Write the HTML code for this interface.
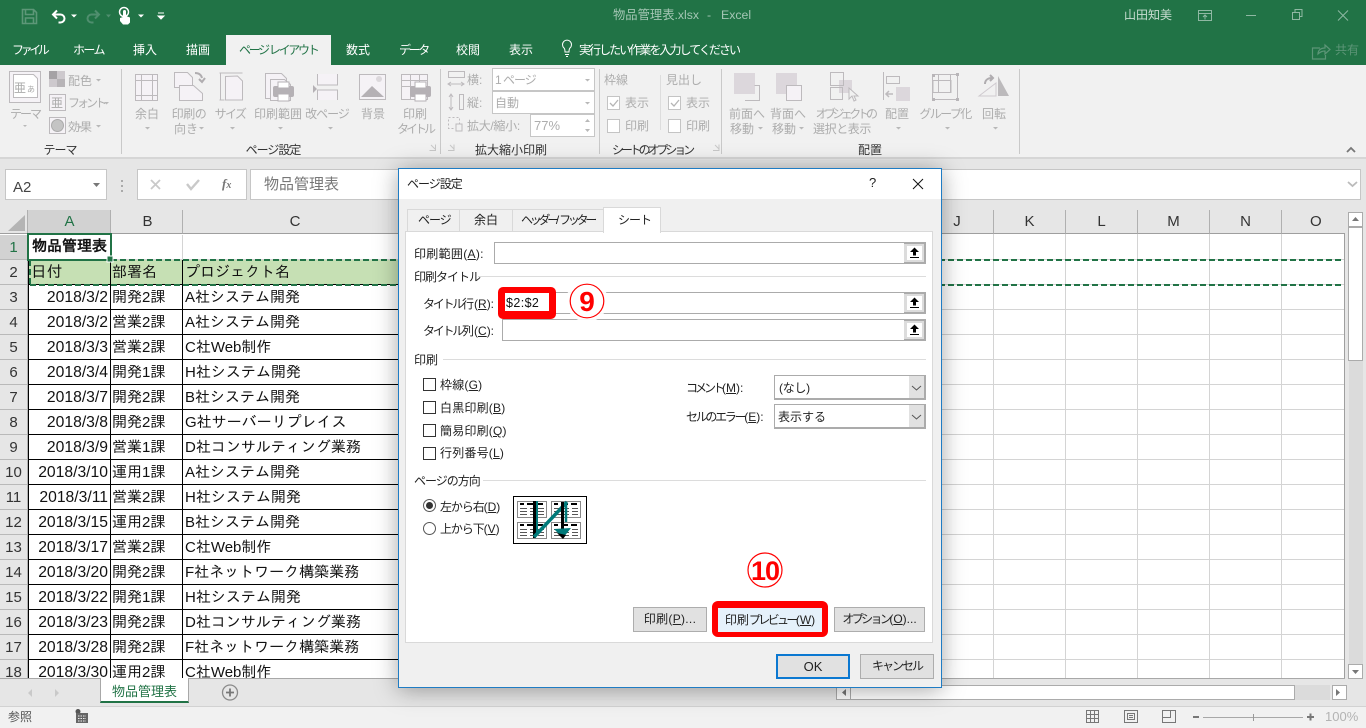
<!DOCTYPE html>
<html lang="ja"><head><meta charset="utf-8"><title>物品管理表.xlsx - Excel</title>
<style>
html,body{margin:0;padding:0;width:1366px;height:728px;overflow:hidden;background:#e6e6e6}
body{position:relative;font-family:"Liberation Sans","Noto Sans CJK JP",sans-serif;font-size:12px;color:#222}
div,span,svg,b{position:absolute;box-sizing:border-box}
.t{position:absolute;white-space:nowrap;line-height:16px;height:16px;font-size:12px;font-family:"Liberation Sans","Noto Sans CJK JP",sans-serif}
.c{transform:translateX(-50%)}
.w{color:#fff}.d{color:#adadad}.g{color:#333}
.k{letter-spacing:-1.6px}.k1{letter-spacing:-1px}
s{text-decoration:none;letter-spacing:0}
.box{background:#fff;border:1px solid #c6c6c6}
.r{left:0;width:398px;height:25px}
.r b{left:0;top:0;width:28px;height:25px;background:#e6e6e6;border-right:1px solid #b0b0b0;border-bottom:1px solid #b9b9b9;font:15px/25px "Liberation Sans",sans-serif;text-align:center;color:#333}
.r span{top:0;height:25px;line-height:25px;font-family:"Liberation Sans","IPAGothic","Noto Sans CJK JP",sans-serif;font-size:15px;color:#111;border-bottom:1px solid #000;white-space:nowrap;overflow:hidden;padding-left:2px}
.r .a{left:28px;width:83px;border-left:1px solid #000;border-right:1px solid #000;text-align:right;padding:0 2px 0 0;font-size:15.7px}
.r .b{left:111px;width:72px;border-right:1px solid #000;padding-left:1px}
.r .e{left:183px;width:215px}
.ch{top:210px;height:24px;background:#e6e6e6;border-right:1px solid #b0b0b0;border-bottom:1px solid #9f9f9f;font:15px/24px "Liberation Sans",sans-serif;text-align:center;color:#333}
.in{background:#fff;border:1px solid #ababab}
.pick{width:22px;height:22px;background:#dcdcdc;border:2px solid #ababab;border-left:0}
.pick i{position:absolute;left:3px;top:2px;width:15px;height:14px;background:#fff;display:block}
.pick svg{left:3px;top:2px}
.cb{width:13px;height:13px;background:#fff;border:1px solid #333}
.rb{width:13px;height:13px;background:#fff;border:1px solid #555;border-radius:50%}
.btn{background:#e1e1e1;border:1px solid #adadad;text-align:center;line-height:23px;font-size:12px;color:#222;white-space:nowrap}
.sep{width:1px;background:#c9c9c9;top:69px;height:85px}
u{text-underline-offset:1px}
</style></head><body>

<!-- title + tabs -->
<div style="left:0;top:0;width:1366px;height:65px;background:#217346"></div>
<div style="left:226px;top:35px;width:105px;height:30px;background:#f1f1f1"></div>
<span class="t" style="left:613px;top:7px;color:#a4c6b4;font-size:12.3px">物品管理表.xlsx</span>
<span class="t" style="left:707px;top:7px;color:#a4c6b4;font-size:12.3px">-</span>
<span class="t" style="left:721px;top:7px;color:#a4c6b4;font-size:12.3px">Excel</span>
<span class="t" style="left:1124px;top:7px;color:#c8ddd1;font-size:12px">山田知美</span>
<span class="t w" style="left:12px;top:42px;letter-spacing:-3.400px">ファイル</span>
<span class="t w k" style="left:73px;top:42px">ホーム</span>
<span class="t w" style="left:133px;top:42px">挿入</span>
<span class="t w" style="left:186px;top:42px">描画</span>
<span class="t k" style="left:239px;top:42px;color:#217346;letter-spacing:-2.300px">ページ レイアウト</span>
<span class="t w" style="left:346px;top:42px">数式</span>
<span class="t w" style="left:399px;top:42px;letter-spacing:-2.400px">データ</span>
<span class="t w" style="left:456px;top:42px">校閲</span>
<span class="t w" style="left:509px;top:42px">表示</span>
<span class="t w" style="left:579px;top:42px;letter-spacing:-1.950px">実行したい作業を入力してください</span>
<span class="t" style="left:1335px;top:42px;color:#5c9577">共有</span>

<!-- ribbon -->
<div style="left:0;top:65px;width:1366px;height:94px;background:#f1f1f1;border-bottom:2px solid #d6d6d6"></div>
<div class="sep" style="left:121px"></div><div class="sep" style="left:440px"></div><div class="sep" style="left:599px"></div><div class="sep" style="left:721px"></div><div class="sep" style="left:1019px"></div>
<div style="left:660px;top:75px;width:1px;height:55px;background:#ddd"></div>

<span class="t d c" style="left:25px;top:106px;letter-spacing:-2px">テーマ</span>
<span class="t d" style="left:68px;top:73px">配色</span>
<span class="t d" style="left:68px;top:95px;letter-spacing:-3px">フォント</span>
<span class="t d" style="left:68px;top:119px">効果</span>
<span class="t d c" style="left:147px;top:106px">余白</span>
<span class="t d c" style="left:189px;top:106px;letter-spacing:-.4px">印刷の</span>
<span class="t d" style="left:174px;top:121px">向き</span>
<span class="t d c k" style="left:230px;top:106px">サイズ</span>
<span class="t d c" style="left:278px;top:106px">印刷範囲</span>
<span class="t d c k1" style="left:327px;top:106px">改ページ</span>
<span class="t d c" style="left:373px;top:106px">背景</span>
<span class="t d c" style="left:415px;top:106px">印刷</span>
<span class="t d c" style="left:415px;top:121px;letter-spacing:-3px">タイトル</span>
<span class="t d" style="left:467px;top:72px">横:</span>
<span class="t d" style="left:467px;top:95px">縦:</span>
<span class="t d" style="left:467px;top:118px;letter-spacing:-.3px">拡大/縮小:</span>
<div class="box" style="left:492px;top:68px;width:103px;height:23px"></div>
<div class="box" style="left:492px;top:91px;width:103px;height:23px"></div>
<div class="box" style="left:530px;top:114px;width:65px;height:23px"></div>
<span class="t d k1" style="left:495px;top:72px">1 ページ</span>
<span class="t d" style="left:495px;top:95px">自動</span>
<span class="t d" style="left:534px;top:118px;font-size:13px">77%</span>
<span class="t d" style="left:604px;top:72px">枠線</span>
<span class="t d" style="left:666px;top:72px">見出し</span>
<span class="t d" style="left:625px;top:95px">表示</span>
<span class="t d" style="left:625px;top:118px">印刷</span>
<span class="t d" style="left:686px;top:95px">表示</span>
<span class="t d" style="left:686px;top:118px">印刷</span>
<span class="t d c" style="left:747px;top:106px">前面へ</span>
<span class="t d" style="left:730px;top:121px">移動</span>
<span class="t d c" style="left:788px;top:106px">背面へ</span>
<span class="t d" style="left:772px;top:121px">移動</span>
<span class="t d c" style="left:845px;top:106px;letter-spacing:-3.600px">オブジェクトの</span>
<span class="t d c" style="left:842px;top:121px;letter-spacing:-.4px">選択と表示</span>
<span class="t d c" style="left:897px;top:106px">配置</span>
<span class="t d c k" style="left:945px;top:106px">グループ化</span>
<span class="t d c" style="left:994px;top:106px">回転</span>

<span class="t g c k1" style="left:60px;top:142px">テーマ</span>
<span class="t g c k1" style="left:273px;top:142px">ページ設定</span>
<span class="t g c" style="left:511px;top:142px">拡大縮小印刷</span>
<span class="t g c" style="left:652px;top:142px;letter-spacing:-3.100px">シートのオプション</span>
<span class="t g c" style="left:870px;top:142px">配置</span>

<!-- ribbon and title icons -->
<svg style="left:0;top:0" width="1366" height="160" fill="none">
<g stroke="#5d9778" stroke-width="1.6"><path d="M22.500 9.500h11l3 3v11h-14zM25.500 9.500v5h8v-5M25.500 23v-5h8v5"/></g>
<path d="M57 10.500l-4 4 4 4M53.500 14.500h7a4 4 0 0 1 0 8h-2" stroke="#fff" stroke-width="2"/>
<path d="M71 14.500h6l-3 3z" fill="#fff"/>
<path d="M95 10.500l4 4-4 4M98.500 14.500h-7a4 4 0 0 0 0 8h2" stroke="#4f8e6e" stroke-width="2"/>
<path d="M106 14.500h5l-2.500 3z" fill="#4f8e6e"/>
<path d="M120 21v-3l3-1V11.500a1.500 1.500 0 0 1 3 0V16l4 1.500v5l-2 2h-5z" fill="#fff"/><circle cx="124" cy="12" r="4.500" stroke="#fff" stroke-width="1.500"/>
<path d="M138 14.500h6l-3 3z" fill="#fff"/>
<path d="M158 13h6M158 16h6l-3 3z" stroke="#fff" fill="#fff"/>
<g stroke="#8fb8a3"><path d="M1198.500 10.500h13v10h-13zM1198.500 13.500h13M1205 19.500v-4M1203 17l2-2 2 2M1246 15.500h10M1292.500 12.500h7v7h-7zM1295 12v-2.500h7v7h-2"/><path d="M1338 10.500l10 10M1348 10.500l-10 10"/></g>
<g stroke="#5c9577" stroke-width="1.200"><path d="M1320 48h-7.500v11h13v-4M1318 54c0-4 3-6 7-6v-3l5 4.500-5 4.500v-3c-3 0-5 1-7 3z"/></g>
<g stroke="#fff"><path d="M564 48a4.500 4.500 0 1 1 6 0c-1 1-1 3-1 4h-4c0-1 0-3-1-4zM565 54.500h4M566 56.500h2"/></g>

<g stroke="#bdbabd" fill="#f5f2f6">
<rect x="9.500" y="71.500" width="31" height="31"/><path d="M13.500 74.500h20l4 4v19h-24z" fill="#fff"/>
<rect x="49.500" y="94.500" width="16" height="16"/><rect x="49.500" y="117.500" width="16" height="16"/>
<rect x="135.500" y="74.500" width="22" height="26"/><path d="M141.500 74.500v26M152.500 74.500v26M135.500 80.500h22M135.500 95.500h22" fill="none"/>
<path d="M174.500 72.500h13l5 5v10h-18z"/><path d="M179.500 85.500h14l9 8v7h-23z"/>
<path d="M219.500 73h23M219.500 100h5M225.500 76.500v23.500h17v-19l-5-5z"/><path d="M220.500 73v27"/>
<path d="M265.500 73.500h16l5 5v20h-21z"/><path d="M270.500 79.500h14l6 5v16h-20z"/>
<path d="M317.500 74v11h20V74M317.500 100V90h20v10" stroke-width="1"/>
<rect x="359.500" y="74.500" width="26" height="25"/>
<rect x="401.500" y="74.500" width="26" height="25"/><path d="M401.500 80.500h26M401.500 86.500h26M410.500 74.500v25M419.500 74.500v25" fill="none"/>
</g>
<g fill="#b5b1b5">
<path d="M49 71h8v8h-8z" fill="#a5a2a5"/><path d="M57 71h8v8h-8z" fill="#cdc9cd"/><path d="M49 79h8v8h-8z" fill="#cdc9cd"/><path d="M57 79h8v8h-8z" fill="#b7b4b7"/>
<circle cx="57.500" cy="125.500" r="6" fill="#c4c4c4" stroke="#aaa"/>
<path d="M195 73c3 0 6 1 7 5M199 79l3 3 3-4" fill="none" stroke="#b0adb0" stroke-width="2"/>
<rect x="273" y="86" width="21" height="11" rx="2"/><rect x="278" y="82" width="11" height="6" fill="#fff" stroke="#b5b1b5"/><rect x="278" y="94" width="11" height="7" fill="#fff" stroke="#b5b1b5"/>
<path d="M313 85l4 4-4 4z"/>
<path d="M361 97l11-11 12 11z"/><circle cx="379" cy="79" r="3" fill="#dcd8dc"/>
<rect x="410" y="86" width="21" height="11" rx="2"/><rect x="415" y="82" width="11" height="6" fill="#fff" stroke="#b5b1b5"/><rect x="415" y="94" width="11" height="7" fill="#fff" stroke="#b5b1b5"/>
</g>
<g fill="#b8b8b8">
<path d="M23 125h4l-2 2zM77 126h5l-2.500 2.500zM145 127h5l-2.500 2.500zM199 127h5l-2.500 2.500zM230 127h5l-2.500 2.500zM278 127h5l-2.500 2.500zM328 127h5l-2.500 2.500z"/>
<path d="M96 79h5l-2.500 2.500zM104 102h5l-2.500 2.500zM96 125h5l-2.500 2.500zM585 79h5l-2.500 2.500zM585 102h5l-2.500 2.500zM585 122l2.500-3 2.500 3zM585 129h5l-2.500 3z"/>
<path d="M758 127h5l-2.500 2.500zM799 127h5l-2.500 2.500zM896 127h5l-2.500 2.500zM945 127h5l-2.500 2.500zM993 127h5l-2.500 2.500z"/>
</g>
<g stroke="#bdbabd"><path d="M448.500 71.500h16v6h-16zM448 84h16M451 82l-3 2 3 2M461 82l3 2-3 2"/><path d="M459.500 94.500h4v15h-4zM451 95v14M449 97l2-3 2 3M449 107l2 3 2-3"/><path d="M448.500 117.500h11v11h-11z" stroke-dasharray="2 2"/><path d="M456 124h6v7h-6z" fill="#f1f1f1"/></g>
<g stroke="#c4c4c4" fill="#fff"><rect x="607.500" y="96.500" width="12" height="13"/><rect x="607.500" y="119.500" width="12" height="13"/><rect x="668.500" y="96.500" width="12" height="13"/><rect x="668.500" y="119.500" width="12" height="13"/></g>
<path d="M610 103l3 3 5-6M671 103l3 3 5-6" stroke="#b5b5b5" stroke-width="1.300"/>
<g fill="#dcd7dc"><rect x="734" y="73" width="21" height="21"/><rect x="776" y="73" width="21" height="21"/><rect x="839" y="80" width="13" height="13"/><rect x="896" y="87" width="14" height="14"/></g>
<g stroke="#bdbabd"><path d="M745 100.500h14.500V85.500h-5"/><rect x="786.500" y="85.500" width="15" height="15" fill="#f5f2f6"/><rect x="830.500" y="72.500" width="13" height="13"/><rect x="830.500" y="87.500" width="12" height="12"/><path d="M849 88l0 11 3-3 2 5 2-1-2-4h4z" fill="#f1f1f1"/><path d="M883.500 72v28M886.500 76.500h13v7h-13z"/><path d="M893 94h-6M889 91l-3 3 3 3" stroke-width="1.500"/>
<rect x="932.500" y="74.500" width="25" height="25"/><rect x="938.500" y="74.500" width="12" height="18"/><rect x="933" y="80.500" width="18" height="12"/></g>
<path d="M932 74h3v3h-3zM956 73h3v3h-3zM932 98h3v3h-3zM956 98h3v3h-3z" fill="#b8b5b8"/>
<path d="M1009 96h-11V76z" fill="#bcbabc"/><path d="M979 96l17-13v13z" stroke="#cfcacf"/><path d="M985 84c0-4 3-6 7-6M990 75l3 3-3 3" stroke="#b0adb0" stroke-width="2"/>
<g stroke="#c8c8c8"><path d="M429.500 150.500h6v-6M431 145l4 4"/><path d="M589 150.500h6v-6M591 145l4 4" transform="translate(-141 0)"/><path d="M713 150.500h6v-6M715 145l4 4"/></g>
<path d="M1347 152l4-4 4 4" stroke="#777" stroke-width="1.800"/>
<text x="14" y="92" font-size="12" fill="#aaa" font-family="Noto Sans CJK JP">亜</text><text x="27" y="92" font-size="8" fill="#aaa" font-family="Noto Sans CJK JP">あ</text>
<text x="51" y="107" font-size="12" fill="#aaa" font-family="Noto Sans CJK JP">亜</text>
</svg>

<!-- formula bar -->
<div class="box" style="left:5px;top:169px;width:102px;height:31px"></div>
<span class="t" style="left:13px;top:180px;font-size:15px;color:#444">A2</span>
<svg style="left:0;top:165px" width="260" height="40" fill="none"><path d="M93 18h7l-3.500 4z" fill="#777"/><path d="M122 15v2M122 20v2M122 25v2" stroke="#aaa" stroke-width="2"/></svg>
<div class="box" style="left:137px;top:169px;width:110px;height:31px"></div>
<div class="box" style="left:250px;top:169px;width:1111px;height:31px"></div>
<svg style="left:137px;top:169px" width="110" height="30" fill="none"><path d="M14 11l9 9M23 11l-9 9" stroke="#c9c9c9" stroke-width="1.800"/><path d="M50 15l4 5 8-9" stroke="#c9c9c9" stroke-width="2.400"/></svg>
<span class="t" style="left:222px;top:176px;font:italic bold 13px/16px 'Liberation Serif',serif;color:#777">f<span style="position:static;font-size:10px">x</span></span>
<span class="t" style="left:264px;top:177px;font-size:15px;color:#777">物品管理表</span>
<svg style="left:1345px;top:178px" width="16" height="14" fill="none"><path d="M3 4l4.500 4L12 4" stroke="#bbb" stroke-width="1.800"/></svg>

<!-- sheet -->
<div style="left:0;top:210px;width:1345px;height:468px;background:#fff;border-right:1px solid #9f9f9f"></div>
<div style="left:0;top:210px;width:1344px;height:468px;background-image:repeating-linear-gradient(to bottom,transparent 0,transparent 24px,#d4d4d4 24px,#d4d4d4 25px);background-position:0 25px;background-repeat:no-repeat"></div>
<div class="ch" style="left:0;width:28px"></div>
<svg style="left:0;top:210px" width="28" height="24"><path d="M25 5v16H8z" fill="#b4b4b4"/></svg>
<div class="ch" style="left:28px;width:83px;background:#d2d2d2;color:#217346;padding-left:1px">A</div>
<div class="ch" style="left:111px;width:72px;padding-left:2px">B</div>
<div class="ch" style="left:183px;width:216px;padding-left:9px">C</div>
<div class="ch" style="left:921px;width:73px">J</div>
<div class="ch" style="left:994px;width:72px">K</div>
<div class="ch" style="left:1066px;width:72px">L</div>
<div class="ch" style="left:1138px;width:72px">M</div>
<div class="ch" style="left:1210px;width:72px">N</div>
<div class="ch" style="left:1282px;width:63px;border-right:0;text-align:left;padding-left:28px">O</div>
<div style="left:993px;top:234px;width:1px;height:444px;background:#d4d4d4"></div>
<div style="left:1065px;top:234px;width:1px;height:444px;background:#d4d4d4"></div>
<div style="left:1137px;top:234px;width:1px;height:444px;background:#d4d4d4"></div>
<div style="left:1209px;top:234px;width:1px;height:444px;background:#d4d4d4"></div>
<div style="left:1281px;top:234px;width:1px;height:444px;background:#d4d4d4"></div>

<div style="left:0;top:234px;width:1345px;height:444px;overflow:hidden">
<div class="r" style="top:1px"><b style="background:#d2d2d2;color:#217346">1</b></div>
<div style="left:110px;top:1px;width:1px;height:25px;background:#d4d4d4"></div>
<div style="left:182px;top:1px;width:1px;height:25px;background:#d4d4d4"></div>
<div class="r" style="top:26px;background:#c6e0b4"><b>2</b><span class="a" style="text-align:left;padding-left:2px;background:#c6e0b4">日付</span><span class="b" style="background:#c6e0b4">部署名</span><span class="e" style="background:#c6e0b4">プロジェクト名</span></div>
<div class="r" style="top:51px"><b>3</b><span class="a">2018/3/2</span><span class="b">開発2課</span><span class="e">A社システム開発</span></div>
<div class="r" style="top:76px"><b>4</b><span class="a">2018/3/2</span><span class="b">営業2課</span><span class="e">A社システム開発</span></div>
<div class="r" style="top:101px"><b>5</b><span class="a">2018/3/3</span><span class="b">営業2課</span><span class="e">C社Web制作</span></div>
<div class="r" style="top:126px"><b>6</b><span class="a">2018/3/4</span><span class="b">開発1課</span><span class="e">H社システム開発</span></div>
<div class="r" style="top:151px"><b>7</b><span class="a">2018/3/7</span><span class="b">開発2課</span><span class="e">B社システム開発</span></div>
<div class="r" style="top:176px"><b>8</b><span class="a">2018/3/8</span><span class="b">開発2課</span><span class="e">G社サーバーリプレイス</span></div>
<div class="r" style="top:201px"><b>9</b><span class="a">2018/3/9</span><span class="b">営業1課</span><span class="e">D社コンサルティング業務</span></div>
<div class="r" style="top:226px"><b>10</b><span class="a">2018/3/10</span><span class="b">運用1課</span><span class="e">A社システム開発</span></div>
<div class="r" style="top:251px"><b>11</b><span class="a">2018/3/11</span><span class="b">営業2課</span><span class="e">H社システム開発</span></div>
<div class="r" style="top:276px"><b>12</b><span class="a">2018/3/15</span><span class="b">運用2課</span><span class="e">B社システム開発</span></div>
<div class="r" style="top:301px"><b>13</b><span class="a">2018/3/17</span><span class="b">営業2課</span><span class="e">C社Web制作</span></div>
<div class="r" style="top:326px"><b>14</b><span class="a">2018/3/20</span><span class="b">開発2課</span><span class="e">F社ネットワーク構築業務</span></div>
<div class="r" style="top:351px"><b>15</b><span class="a">2018/3/22</span><span class="b">開発1課</span><span class="e">H社システム開発</span></div>
<div class="r" style="top:376px"><b>16</b><span class="a">2018/3/23</span><span class="b">開発2課</span><span class="e">D社コンサルティング業務</span></div>
<div class="r" style="top:401px"><b>17</b><span class="a">2018/3/28</span><span class="b">開発2課</span><span class="e">F社ネットワーク構築業務</span></div>
<div class="r" style="top:426px"><b>18</b><span class="a">2018/3/30</span><span class="b">運用2課</span><span class="e">C社Web制作</span></div>
</div>
<span class="t" style="left:32px;top:238px;font-size:15px;font-weight:bold;line-height:18px;height:18px;color:#111;font-family:'Liberation Sans','IPAGothic','Noto Sans CJK JP',sans-serif">物品管理表</span>
<svg style="left:0;top:230px" width="1345" height="60" fill="none">
<path d="M30 30H1344M30 55H1344" stroke="#217346" stroke-width="2" stroke-dasharray="6 3"/>
<path d="M30 30V55" stroke="#217346" stroke-width="2" stroke-dasharray="6 3"/>
<rect x="28" y="4" width="83" height="26" stroke="#217346" stroke-width="2"/>
<rect x="107" y="26" width="6" height="6" fill="#217346" stroke="#fff"/>
</svg>

<!-- scrollbars -->
<div style="left:1345px;top:234px;width:21px;height:472px;background:#e6e6e6"></div>
<div style="left:1345px;top:210px;width:21px;height:24px;background:#e6e6e6"></div>
<div style="left:1349px;top:227px;width:14px;height:437px;background:#dbdbdb"></div>
<div style="left:1348px;top:212px;width:15px;height:15px;background:#fff;border:1px solid #ababab"></div>
<div style="left:1348px;top:227px;width:15px;height:134px;background:#fff;border:1px solid #ababab"></div>
<div style="left:1348px;top:664px;width:15px;height:15px;background:#fff;border:1px solid #ababab"></div>
<svg style="left:1348px;top:212px" width="15" height="470"><path d="M4 9l3.500-4 3.500 4zM4 458h7l-3.500 4z" fill="#777"/></svg>
<div style="left:0;top:678px;width:1345px;height:28px;background:#e6e6e6;border-top:1px solid #a8a8a8"></div>
<div style="left:100px;top:678px;width:89px;height:25px;background:#fff;border-left:1px solid #a8a8a8;border-right:1px solid #a8a8a8;border-bottom:2px solid #217346"></div>
<span class="t" style="left:112px;top:684px;font-size:13px;color:#217346">物品管理表</span>
<svg style="left:20px;top:680px" width="225" height="26" fill="none"><path d="M12 9l-4 4 4 4zM35 9l4 4-4 4z" fill="#c9c9c9"/><circle cx="210" cy="12.500" r="7.500" stroke="#8a8a8a" stroke-width="1.300"/><path d="M206 12.500h8M210 8.500v8" stroke="#777" stroke-width="1.800"/></svg>
<div style="left:942px;top:685px;width:388px;height:15px;background:#dbdbdb"></div>
<div style="left:836px;top:685px;width:15px;height:15px;background:#fff;border:1px solid #ababab"></div>
<div style="left:850px;top:685px;width:445px;height:15px;background:#fff;border:1px solid #ababab"></div>
<div style="left:1332px;top:685px;width:15px;height:15px;background:#fff;border:1px solid #ababab"></div>
<svg style="left:836px;top:685px" width="512" height="15"><path d="M10 4v7l-4-3.500zM500 4v7l4-3.500z" fill="#777"/></svg>

<!-- status -->
<div style="left:0;top:706px;width:1366px;height:22px;background:#f1f1f1;border-top:1px solid #d2d2d2"></div>
<span class="t" style="left:8px;top:709px;color:#555">参照</span>
<svg style="left:0;top:706px" width="1366" height="22" fill="none">
<circle cx="78" cy="5.500" r="2.500" fill="#555"/><path d="M76 7h12v10h-12z" fill="#666"/><path d="M78 10h8M78 12.500h8M78 15h8" stroke="#eee" stroke-dasharray="1.500 1"/>
<g stroke="#777"><path d="M1086.500 4.500h12v12h-12zM1086.500 8.500h12M1086.500 12.500h12M1090.500 4.500v12M1094.500 4.500v12"/><path d="M1124.500 4.500h13v12h-13z" stroke-width="1"/><path d="M1127.500 7.500h7v6h-7zM1129 9.500h4M1129 11.500h4"/><path d="M1162.500 4.500h13v12h-13zM1162.500 11.500h8v-7"/></g>
<path d="M1193 11h6M1307 11h7M1310.500 7.500v7" stroke="#777" stroke-width="2"/>
<path d="M1203 11.500h100" stroke="#a8a8a8"/><path d="M1253.500 8v7" stroke="#999"/>
</svg>
<span class="t" style="left:1325px;top:709px;color:#b3b3b3;font-size:13px">100%</span>

<!-- dialog -->
<div style="left:398px;top:168px;width:544px;height:520px;background:#f0f0f0;border:1px solid #1f7cc4;box-shadow:0 2px 22px rgba(0,0,0,.35)"></div>
<div style="left:399px;top:169px;width:542px;height:30px;background:#fff"></div>
<span class="t k1" style="left:407px;top:176px">ページ設定</span>
<span class="t" style="left:869px;top:175px;font-size:13px;color:#222">?</span>
<svg style="left:905px;top:172px" width="24" height="24" fill="none"><path d="M8 7l10 10M18 7L8 17" stroke="#111" stroke-width="1"/></svg>

<div style="left:407px;top:209px;width:53px;height:23px;background:#f0f0f0;border:1px solid #d9d9d9"></div>
<div style="left:459px;top:209px;width:54px;height:23px;background:#f0f0f0;border:1px solid #d9d9d9"></div>
<div style="left:512px;top:209px;width:93px;height:23px;background:#f0f0f0;border:1px solid #d9d9d9"></div>
<div style="left:405px;top:231px;width:528px;height:412px;background:#fff;border:1px solid #d9d9d9"></div>
<div style="left:603px;top:207px;width:58px;height:26px;background:#fff;border:1px solid #d9d9d9;border-bottom:0"></div>
<span class="t k1" style="left:418px;top:212px">ページ</span>
<span class="t" style="left:474px;top:212px">余白</span>
<span class="t" style="left:521px;top:212px;letter-spacing:-3.300px">ヘッダー<s>/</s>フッター</span>
<span class="t k1" style="left:618px;top:212px">シート</span>

<span class="t" style="left:414px;top:246px;letter-spacing:.3px">印刷範囲(<u>A</u>):</span>
<div class="in" style="left:494px;top:242px;width:411px;height:22px;border-right:0"></div>
<div class="pick" style="left:904px;top:242px"><i></i><svg width="15" height="14" fill="none"><path d="M7.500 1.500l-4.500 4.500h3v3.500h3V6h3z" fill="#000"/><path d="M3 11.500h9" stroke="#000"/></svg></div>
<span class="t k1" style="left:414px;top:269px">印刷タイトル</span>
<div style="left:478px;top:276px;width:448px;height:1px;background:#dcdcdc"></div>
<span class="t" style="left:423px;top:296px;letter-spacing:-2.250px">タイトル<s>行(<u>R</u>):</s></span>
<div class="in" style="left:498px;top:292px;width:407px;height:22px;border-right:0"></div>
<div class="pick" style="left:904px;top:292px"><i></i><svg width="15" height="14" fill="none"><path d="M7.500 1.500l-4.500 4.500h3v3.500h3V6h3z" fill="#000"/><path d="M3 11.500h9" stroke="#000"/></svg></div>
<span class="t" style="left:423px;top:323px;letter-spacing:-2.250px">タイトル<s>列(<u>C</u>):</s></span>
<div class="in" style="left:502px;top:319px;width:403px;height:22px;border-right:0"></div>
<div class="pick" style="left:904px;top:319px"><i></i><svg width="15" height="14" fill="none"><path d="M7.500 1.500l-4.500 4.500h3v3.500h3V6h3z" fill="#000"/><path d="M3 11.500h9" stroke="#000"/></svg></div>
<div style="left:498px;top:287px;width:58px;height:32px;background:#f00;border-radius:5px"></div>
<div style="left:505px;top:293px;width:44px;height:18px;background:#fff"></div>
<span class="t" style="left:506px;top:295px;font-size:12.500px;color:#111;letter-spacing:.4px">$2:$2</span>

<span class="t" style="left:414px;top:352px">印刷</span>
<div style="left:443px;top:359px;width:483px;height:1px;background:#dcdcdc"></div>
<div class="cb" style="left:423px;top:378px"></div><span class="t" style="left:440px;top:377px;letter-spacing:.2px">枠線(<u>G</u>)</span>
<div class="cb" style="left:423px;top:401px"></div><span class="t" style="left:440px;top:400px;letter-spacing:.2px">白黒印刷(<u>B</u>)</span>
<div class="cb" style="left:423px;top:424px"></div><span class="t" style="left:440px;top:423px;letter-spacing:.2px">簡易印刷(<u>Q</u>)</span>
<div class="cb" style="left:423px;top:447px"></div><span class="t" style="left:440px;top:445px;letter-spacing:.2px">行列番号(<u>L</u>)</span>
<span class="t k1" style="left:414px;top:473px">ページの方向</span>
<div style="left:483px;top:480px;width:443px;height:1px;background:#dcdcdc"></div>
<div class="rb" style="left:423px;top:499px"></div><div style="left:426px;top:502px;width:7px;height:7px;border-radius:50%;background:#333"></div>
<div class="rb" style="left:423px;top:522px"></div>
<span class="t" style="left:440px;top:499px;letter-spacing:-1.100px">左から右<s>(<u>D</u>)</s></span>
<span class="t" style="left:440px;top:521px;letter-spacing:-1.100px">上から下<s>(<u>V</u>)</s></span>
<svg style="left:513px;top:496px" width="74" height="48" fill="#fff">
<rect x=".5" y=".5" width="73" height="47" stroke="#000"/>
<g stroke="#888"><rect x="4.500" y="5.500" width="29" height="16"/><rect x="38.500" y="5.500" width="29" height="16"/><rect x="4.500" y="26.500" width="29" height="16"/><rect x="38.500" y="26.500" width="29" height="16"/></g>
<path d="M7 8h4M14 8h7M24 8h6M41 8h4M48 8h7M58 8h6M7 29h4M14 29h7M24 29h6M41 29h4M48 29h7M58 29h6" stroke="#000" stroke-width="2"/>
<path d="M7 12.500h7M7 15.500h7M7 18.500h7M17 12.500h5M17 15.500h5M17 18.500h5M25 12.500h6M25 15.500h6M25 18.500h6M41 12.500h7M41 15.500h7M41 18.500h7M51 12.500h5M51 15.500h5M51 18.500h5M59 12.500h6M59 15.500h6M59 18.500h6M7 33.500h7M7 36.500h7M7 39.500h7M17 33.500h5M17 36.500h5M17 39.500h5M25 33.500h6M25 36.500h6M25 39.500h6M41 33.500h7M41 36.500h7M41 39.500h7M51 33.500h5M51 36.500h5M51 39.500h5M59 33.500h6M59 36.500h6M59 39.500h6" stroke="#555"/>
<path d="M21.500 5v37" stroke="#000" stroke-width="3"/><path d="M24 5v33" stroke="#007a7a" stroke-width="2"/>
<path d="M21 41L54 6" stroke="#007a7a" stroke-width="3.500"/><path d="M49.500 6v33" stroke="#000" stroke-width="3"/><path d="M53 6v20" stroke="#007a7a" stroke-width="2.500"/>
<path d="M41 33l9 9 8-10z" fill="#007a7a"/><path d="M44 37l6 6 3-4z" fill="#000"/>
</svg>

<span class="t" style="left:686px;top:380px;letter-spacing:-3px">コメント<s>(<u>M</u>):</s></span>
<span class="t" style="left:686px;top:409px;letter-spacing:-2.300px">セルのエラー<s>(<u>E</u>):</s></span>
<div class="in" style="left:774px;top:375px;width:152px;height:25px;border-width:1px 2px 2px 1px"></div>
<div class="in" style="left:774px;top:404px;width:152px;height:25px;border-width:1px 2px 2px 1px"></div>
<div style="left:909px;top:376px;width:15px;height:22px;background:#e1e1e1"></div>
<div style="left:909px;top:405px;width:15px;height:22px;background:#e1e1e1"></div>
<svg style="left:909px;top:377px" width="15" height="50" fill="none"><path d="M3 9l4.500 4L12 9M3 38l4.500 4L12 38" stroke="#555"/></svg>
<span class="t" style="left:779px;top:380px;letter-spacing:-.3px">(なし)</span>
<span class="t" style="left:778px;top:409px">表示する</span>

<div class="btn" style="left:633px;top:607px;width:74px;height:25px;letter-spacing:.3px">印刷(<u>P</u>)...</div>
<div style="left:712px;top:601px;width:116px;height:36px;background:#f00;border-radius:6px"></div>
<div class="btn" style="left:718px;top:608px;width:104px;height:24px;background:#e5f1fb;border:0;line-height:24px"><s>印刷</s><s style="letter-spacing:-2.600px">プレビュー</s><s>(<u>W</u>)</s></div>
<div class="btn" style="left:834px;top:607px;width:91px;height:25px"><s style="letter-spacing:-2.600px">オプション</s><s>(<u>O</u>)...</s></div>
<div class="btn" style="left:776px;top:654px;width:74px;height:25px;border:2px solid #0b78d1;line-height:21px;font-size:13px">OK</div>
<div class="btn" style="left:860px;top:654px;width:74px;height:25px;letter-spacing:-2px">キャンセル</div>

<!-- number badges -->
<svg style="left:560px;top:275px" width="54" height="54" fill="none"><circle cx="27" cy="26" r="21" fill="#fff" opacity=".9"/><circle cx="27" cy="26" r="16.800" stroke="#f00" stroke-width="1.200" fill="#fff"/><text x="27" y="36" text-anchor="middle" font-family="Liberation Sans" font-weight="bold" font-size="28" fill="#f00">9</text></svg>
<svg style="left:738px;top:543px" width="54" height="54" fill="none"><circle cx="27" cy="27" r="21" fill="#fff" opacity=".9"/><circle cx="27" cy="27" r="17" stroke="#f00" stroke-width="1.200" fill="#fff"/><text x="27" y="37" text-anchor="middle" font-family="Liberation Sans" font-weight="bold" font-size="27" letter-spacing="-1" fill="#f00">10</text></svg>
</body></html>
